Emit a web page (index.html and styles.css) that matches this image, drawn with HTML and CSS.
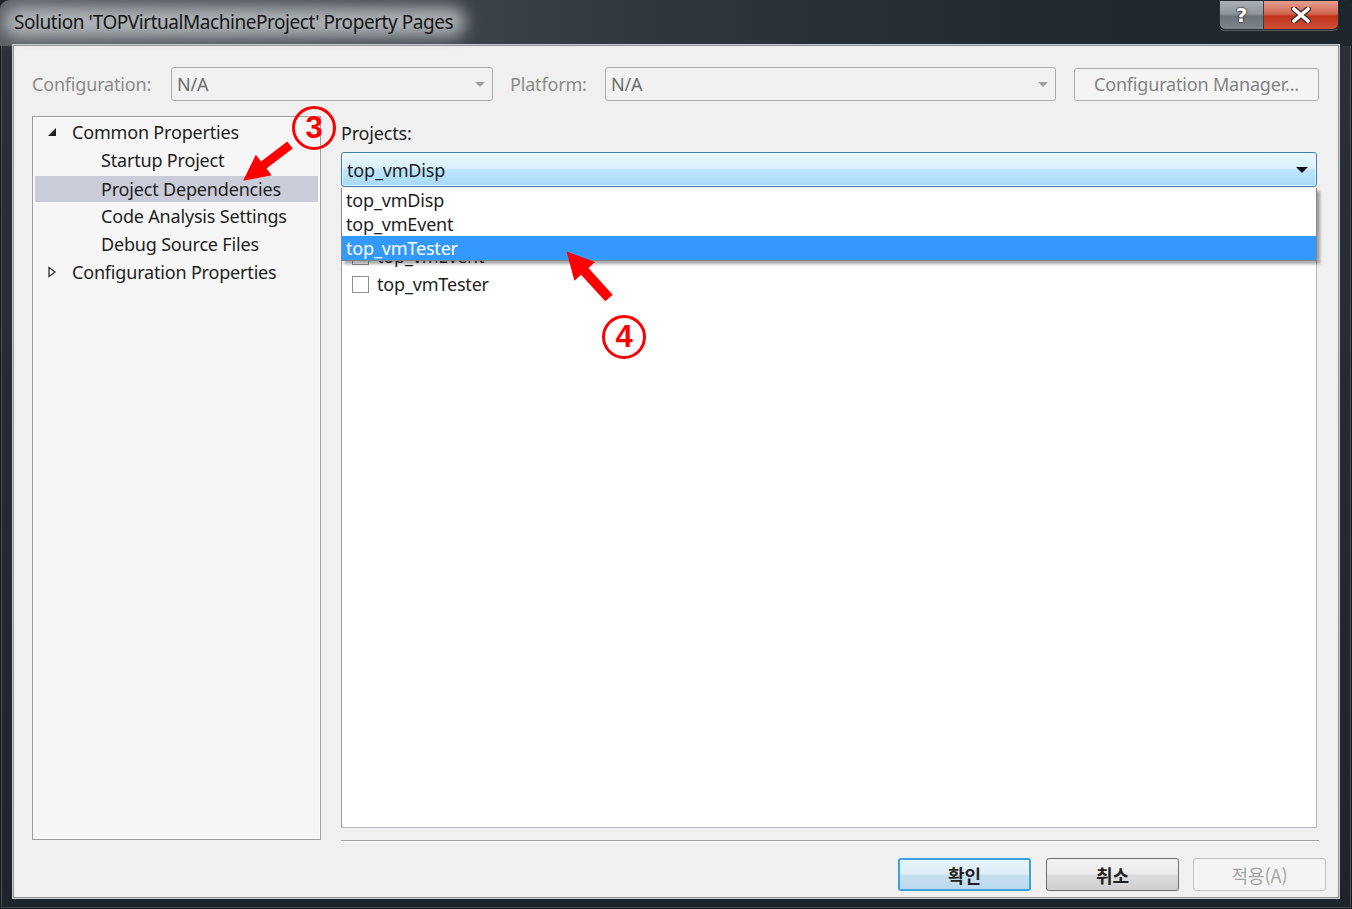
FILE: index.html
```html
<!DOCTYPE html>
<html lang="ko">
<head>
<meta charset="utf-8">
<title>Property Pages</title>
<link rel="stylesheet" href="styles.css">
</head>
<body>
<div class="window">
  <div class="titlebar">
    <div class="title"><span class="title-text">Solution 'TOPVirtualMachineProject' Property Pages</span></div>
    <div class="caption-btns">
      <div class="cbtn help">?</div>
      <div class="cbtn close">
        <svg width="20" height="16" viewBox="0 0 20 16"><path d="M3 2 L17 14 M17 2 L3 14" stroke="#3a2a28" stroke-width="6" stroke-linecap="round"/><path d="M3 2 L17 14 M17 2 L3 14" stroke="#fff" stroke-width="3.6" stroke-linecap="round"/></svg>
      </div>
    </div>
  </div>
  <div class="client">
    <div class="config-row">
      <div class="lbl cfg-lbl">Configuration:</div>
      <div class="combo cfg-combo"><span>N/A</span><i class="tri"></i></div>
      <div class="lbl plat-lbl">Platform:</div>
      <div class="combo plat-combo"><span>N/A</span><i class="tri"></i></div>
      <div class="cm-btn">Configuration Manager...</div>
    </div>
    <div class="main">
      <div class="tree">
        <div class="row">
          <span class="exp"><svg width="10" height="10" viewBox="0 0 10 10"><polygon points="9,1 9,9 1,9" fill="#1e1e1e"/></svg></span>
          <span>Common Properties</span>
        </div>
        <div class="row child">Startup Project</div>
        <div class="row child sel">Project Dependencies</div>
        <div class="row child">Code Analysis Settings</div>
        <div class="row child">Debug Source Files</div>
        <div class="row">
          <span class="exp"><svg width="10" height="12" viewBox="0 0 10 12"><polygon points="2,1.5 8,6 2,10.5" fill="none" stroke="#333" stroke-width="1.3"/></svg></span>
          <span>Configuration Properties</span>
        </div>
      </div>
      <div class="pane">
        <div class="pane-lbl">Projects:</div>
        <div class="proj-combo"><span>top_vmDisp</span><i class="tri-dark"></i></div>
        <div class="dep-gap"></div>
        <div class="listbox">
          <div class="chk-row"><i class="chk"></i><span>top_vmEvent</span></div>
          <div class="chk-row"><i class="chk"></i><span>top_vmTester</span></div>
        </div>
        <div class="sep"></div>
        <div class="popup">
          <div class="opt">top_vmDisp</div>
          <div class="opt">top_vmEvent</div>
          <div class="opt hl">top_vmTester</div>
        </div>
      </div>
    </div>
    <div class="buttons">
      <div class="dbtn ok">확인</div>
      <div class="dbtn cancel">취소</div>
      <div class="dbtn apply">적용(A)</div>
    </div>
  </div>
  <svg class="annot" width="1352" height="909" viewBox="0 0 1352 909">
    <g transform="translate(290 145) rotate(142.7)">
      <polygon points="0,-4.5 33,-4.5 33,-13 59,0 33,13 33,4.5 0,4.5" fill="#ff0000"/>
    </g>
    <g transform="translate(609 298) rotate(-132.4)">
      <polygon points="0,-5 36,-5 36,-14 63,0 36,14 36,5 0,5" fill="#ff0000"/>
    </g>
  </svg>
  <div class="badge badge3">3</div>
  <div class="badge badge4">4</div>
</div>
</body>
</html>
```

FILE: styles.css
```css
* { box-sizing: border-box; }
body {
  margin: 0;
  background: #1d242c;
  font-family: "Noto Sans", "Noto Sans CJK KR", sans-serif;
  color: #1e1e1e;
}
.window {
  width: 1352px;
  height: 909px;
  position: relative;
  display: flex;
  flex-direction: column;
  background: linear-gradient(180deg, #3a4148 0, #2a3139 46px, #1c232b 100%);
  border-radius: 9px 9px 0 0;
  overflow: hidden;
  box-shadow: inset 0 0 0 1px #12171d, inset 0 0 0 2px #4b5259;
}
.titlebar {
  height: 46px;
  display: flex;
  justify-content: space-between;
  align-items: flex-start;
  background: linear-gradient(90deg, #575d63 0%, #454b52 25%, #2e353d 50%, #222a32 75%, #1d252d 100%);
  border-radius: 9px 9px 0 0;
}
.title {
  padding: 9px 0 0 14px;
}
.title-text {
  position: relative;
  z-index: 0;
  font-size: 19px;
  line-height: 26px;
  color: #161616;
  letter-spacing: -0.45px;
}
.title-text::before {
  content: "";
  position: absolute;
  left: -10px;
  right: -12px;
  top: -2px;
  bottom: -2px;
  background: rgba(200, 204, 208, 0.8);
  border-radius: 14px;
  filter: blur(8px);
  z-index: -1;
}
.caption-btns {
  display: flex;
  margin-right: 13px;
  margin-top: 1px;
  border: 1px solid #2a2f35;
  border-top: none;
  border-radius: 0 0 6px 6px;
  overflow: hidden;
  box-shadow: 0 1px 0 rgba(255,255,255,0.25);
}
.cbtn {
  height: 28px;
  display: flex;
  align-items: center;
  justify-content: center;
}
.help {
  width: 44px;
  background: linear-gradient(180deg, #a9b0b6 0%, #8f979e 45%, #6c747b 55%, #7e868d 100%);
  border-right: 1px solid #3b4046;
  color: #fff;
  font-weight: bold;
  font-size: 20px;
  font-family: "DejaVu Sans", sans-serif;
  text-shadow: 0 0 2px #222, 0 0 2px #222;
}
.close {
  width: 74px;
  background: linear-gradient(180deg, #e6a192 0%, #d2654f 45%, #c0321a 55%, #d0503a 100%);
}
.client {
  flex: 1;
  margin: 0 14px 12px 14px;
  background: #f0f0f0;
  box-shadow: 0 0 0 1px #8e949a, 0 0 0 2px #c7cbce;
  display: flex;
  flex-direction: column;
  font-size: 18px;
  letter-spacing: -0.18px;
}
.config-row {
  display: flex;
  align-items: center;
  height: 34px;
  margin-top: 21px;
  padding-left: 18px;
}
.lbl {
  color: #8b8b8b;
  font-size: 18px;
}
.cfg-lbl { width: 139px; }
.plat-lbl { width: 95px; margin-left: 17px; }
.combo {
  height: 34px;
  border: 1px solid #acacac;
  border-radius: 3px;
  background: #f2f2f2;
  display: flex;
  align-items: center;
  justify-content: space-between;
  padding: 0 7px 0 5px;
  color: #6d6d6d;
}
.cfg-combo { width: 322px; }
.plat-combo { width: 451px; }
.tri {
  width: 0;
  height: 0;
  border-left: 5px solid transparent;
  border-right: 5px solid transparent;
  border-top: 5px solid #a0a0a0;
}
.cm-btn {
  width: 245px;
  height: 33px;
  margin-left: 18px;
  border: 1px solid #adadad;
  border-radius: 3px;
  background: #f4f4f4;
  color: #838383;
  display: flex;
  align-items: center;
  justify-content: center;
}
.main {
  display: flex;
  margin-top: 15px;
  padding-left: 18px;
  gap: 20px;
  height: 727px;
}
.tree {
  width: 289px;
  height: 724px;
  border: 1px solid #9d9d9d;
  box-shadow: inset 0 0 0 1px #fcfcfc;
  background: #f6f6f6;
  padding-top: 1px;
}
.row {
  height: 28px;
  display: flex;
  align-items: center;
  padding-left: 14px;
  white-space: nowrap;
}
.exp {
  width: 25px;
  display: flex;
  align-items: center;
}
.row.child { padding-left: 68px; }
.row.sel {
  margin: 0 2px;
  padding-left: 66px;
  border-top: 2px solid transparent;
  background: #cbccd9;
  background-clip: padding-box;
}
.pane {
  position: relative;
  width: 978px;
  display: flex;
  flex-direction: column;
}
.pane-lbl {
  height: 34px;
  line-height: 34px;
}
.proj-combo {
  margin-top: 2px;
  width: 976px;
  height: 35px;
  border: 1px solid #3c7fb1;
  border-radius: 3px;
  background: linear-gradient(180deg, #eaf6fd 0%, #d9f0fc 45%, #bee6fd 50%, #a7d9f5 100%);
  display: flex;
  align-items: center;
  justify-content: space-between;
  padding: 0 8px 0 5px;
  box-shadow: inset 0 0 0 1px rgba(255,255,255,0.6);
}
.tri-dark {
  width: 0;
  height: 0;
  border-left: 6px solid transparent;
  border-right: 6px solid transparent;
  border-top: 6px solid #111;
}
.dep-gap {
  height: 53px;
}
.listbox {
  width: 976px;
  height: 588px;
  border: 1px solid #9a9ea4;
  border-right-color: #b5b8bc;
  border-bottom-color: #b5b8bc;
  background: #fff;
}
.chk-row {
  height: 28px;
  display: flex;
  align-items: center;
  padding-left: 10px;
  gap: 8px;
}
.chk-row:first-child { margin-top: 1px; }
.chk {
  width: 17px;
  height: 17px;
  border: 1px solid #8e8f8f;
  background: #fff;
}
.sep {
  margin-top: 12px;
  height: 2px;
  border-top: 1px solid #a0a0a0;
  border-bottom: 1px solid #ffffff;
}
.popup {
  position: absolute;
  left: 0;
  top: 72px;
  width: 976px;
  height: 73px;
  background: #fff;
  border: 1px solid #828790;
  border-top: none;
  box-shadow: 3px 3px 3px rgba(0,0,0,0.35);
}
.opt {
  height: 24px;
  line-height: 24px;
  padding-left: 4px;
}
.opt.hl {
  background: #3399ff;
  color: #fff;
}
.buttons {
  display: flex;
  justify-content: flex-end;
  margin-top: 15px;
  padding-right: 12px;
  gap: 15px;
}
.dbtn {
  width: 133px;
  height: 33px;
  border-radius: 3px;
  display: flex;
  align-items: center;
  justify-content: center;
  font-family: "Noto Sans CJK KR", sans-serif;
  font-weight: bold;
  font-size: 18px;
  letter-spacing: 0;
}
.ok {
  border: 2px solid #3ca2dc;
  background: linear-gradient(180deg, #e9f4fb 0%, #dcecf7 48%, #c8e0f0 52%, #bcd9ee 100%);
  color: #222;
}
.cancel {
  border: 1px solid #707070;
  background: linear-gradient(180deg, #f3f3f3 0%, #ebebeb 48%, #dddddd 52%, #cfcfcf 100%);
  color: #222;
}
.apply {
  border: 1px solid #c2c2c2;
  background: #f4f4f4;
  color: #a3a3a3;
  font-weight: normal;
  margin-left: -1px;
}
.annot {
  position: absolute;
  left: 0;
  top: 0;
  pointer-events: none;
}
.badge {
  position: absolute;
  width: 44px;
  height: 44px;
  border: 3px solid #ff0000;
  border-radius: 50%;
  color: #ff0000;
  font-family: "Liberation Sans", sans-serif;
  font-weight: bold;
  font-size: 31px;
  line-height: 38px;
  text-align: center;
}
.badge3 { left: 292px; top: 106px; }
.badge4 { left: 602px; top: 315px; }
```
